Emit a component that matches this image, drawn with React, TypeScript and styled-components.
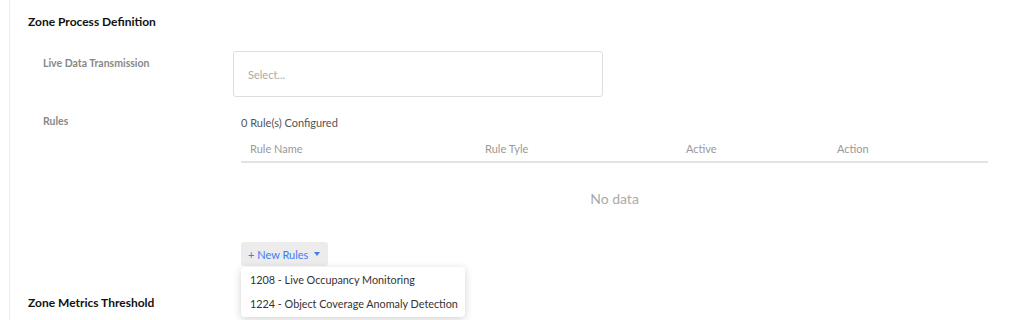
import React from 'react';
import styled, { createGlobalStyle } from 'styled-components';

const GlobalStyle = createGlobalStyle`
  body {
    margin: 0;
    background: #fff;
    font-family: Lato, "Noto Sans", sans-serif;
  }
`;

const Page = styled.div`
  width: 1024px;
  height: 320px;
  overflow: hidden;
  padding-left: 9px;
  box-sizing: border-box;
`;

const Panel = styled.div`
  border-left: 1px solid #ececec;
  padding: 14px 0 0 18px;
  height: 100%;
  box-sizing: border-box;
`;

const SectionTitle = styled.h3<{ $top?: number }>`
  margin: ${(p) => p.$top ?? 0}px 0 0;
  font-size: 12px;
  font-weight: 700;
  color: #111;
  line-height: 16px;
`;

const FieldRow = styled.div<{ $top: number }>`
  display: grid;
  grid-template-columns: 190px 1fr;
  margin-top: ${(p) => p.$top}px;
  padding-left: 15px;
`;

const Label = styled.div`
  font-size: 10.5px;
  font-weight: 700;
  color: #888;
  line-height: 14px;
  padding-top: 5px;
`;

const SelectBox = styled.div`
  width: 370px;
  height: 46px;
  box-sizing: border-box;
  border: 1px solid #ddd;
  border-radius: 3px;
  display: flex;
  align-items: center;
  padding-left: 14px;
  font-size: 11px;
  color: #aaa;
`;

const RulesBody = styled.div`
  padding-left: 8px;
  width: 747px;
`;

const Count = styled.div`
  font-size: 11px;
  color: #555;
  line-height: 14px;
  padding-top: 7px;
`;

const TableHead = styled.div`
  display: grid;
  grid-template-columns: 235px 201px 151px 1fr;
  border-bottom: 2px solid #e2e2e2;
  margin-top: 6px;
  height: 25px;
  align-items: center;
`;

const HeadCell = styled.div`
  font-size: 11px;
  color: #999;
  padding-left: 9px;
`;

const Empty = styled.div`
  height: 79px;
  box-sizing: border-box;
  padding-top: 28px;
  text-align: center;
  line-height: 16px;
  font-size: 14px;
  color: #aaa;
`;

const MenuWrap = styled.div`
  position: relative;
  display: inline-block;
`;

const NewButton = styled.button`
  border: none;
  background: #ececec;
  border-radius: 3px;
  height: 24px;
  padding: 0 8px 0 7px;
  font-family: inherit;
  font-size: 11px;
  color: #3d7cf5;
  display: flex;
  align-items: center;
  gap: 6px;
  cursor: pointer;
`;

const Caret = styled.span`
  width: 0;
  height: 0;
  border-left: 3.5px solid transparent;
  border-right: 3.5px solid transparent;
  border-top: 4px solid #3d7cf5;
  margin-top: -1px;
`;

const Menu = styled.ul`
  position: absolute;
  top: 25px;
  left: 0;
  z-index: 2;
  margin: 0;
  padding: 1px 0;
  list-style: none;
  width: max-content;
  background: #fff;
  border-radius: 4px;
  box-shadow: 0 2px 8px rgba(0, 0, 0, 0.18);
`;

const MenuItem = styled.li`
  font-size: 10.8px;
  color: #333;
  padding: 0 7px 0 9px;
  height: 24px;
  line-height: 24px;
  white-space: nowrap;
`;

const columns = ['Rule Name', 'Rule Tyle', 'Active', 'Action'];
const rules = ['1208 - Live Occupancy Monitoring', '1224 - Object Coverage Anomaly Detection'];

export default function App() {
  return (
    <Page>
      <GlobalStyle />
      <Panel>
        <SectionTitle>Zone Process Definition</SectionTitle>
        <FieldRow $top={21}>
          <Label>Live Data Transmission</Label>
          <SelectBox>Select...</SelectBox>
        </FieldRow>
        <FieldRow $top={12}>
          <Label>Rules</Label>
          <RulesBody>
            <Count>0 Rule(s) Configured</Count>
            <TableHead>
              {columns.map((c) => (
                <HeadCell key={c}>{c}</HeadCell>
              ))}
            </TableHead>
            <Empty>No data</Empty>
            <MenuWrap>
              <NewButton>
                + New Rules <Caret />
              </NewButton>
              <Menu>
                {rules.map((r) => (
                  <MenuItem key={r}>{r}</MenuItem>
                ))}
              </Menu>
            </MenuWrap>
          </RulesBody>
        </FieldRow>
        <SectionTitle $top={29}>Zone Metrics Threshold</SectionTitle>
      </Panel>
    </Page>
  );
}
